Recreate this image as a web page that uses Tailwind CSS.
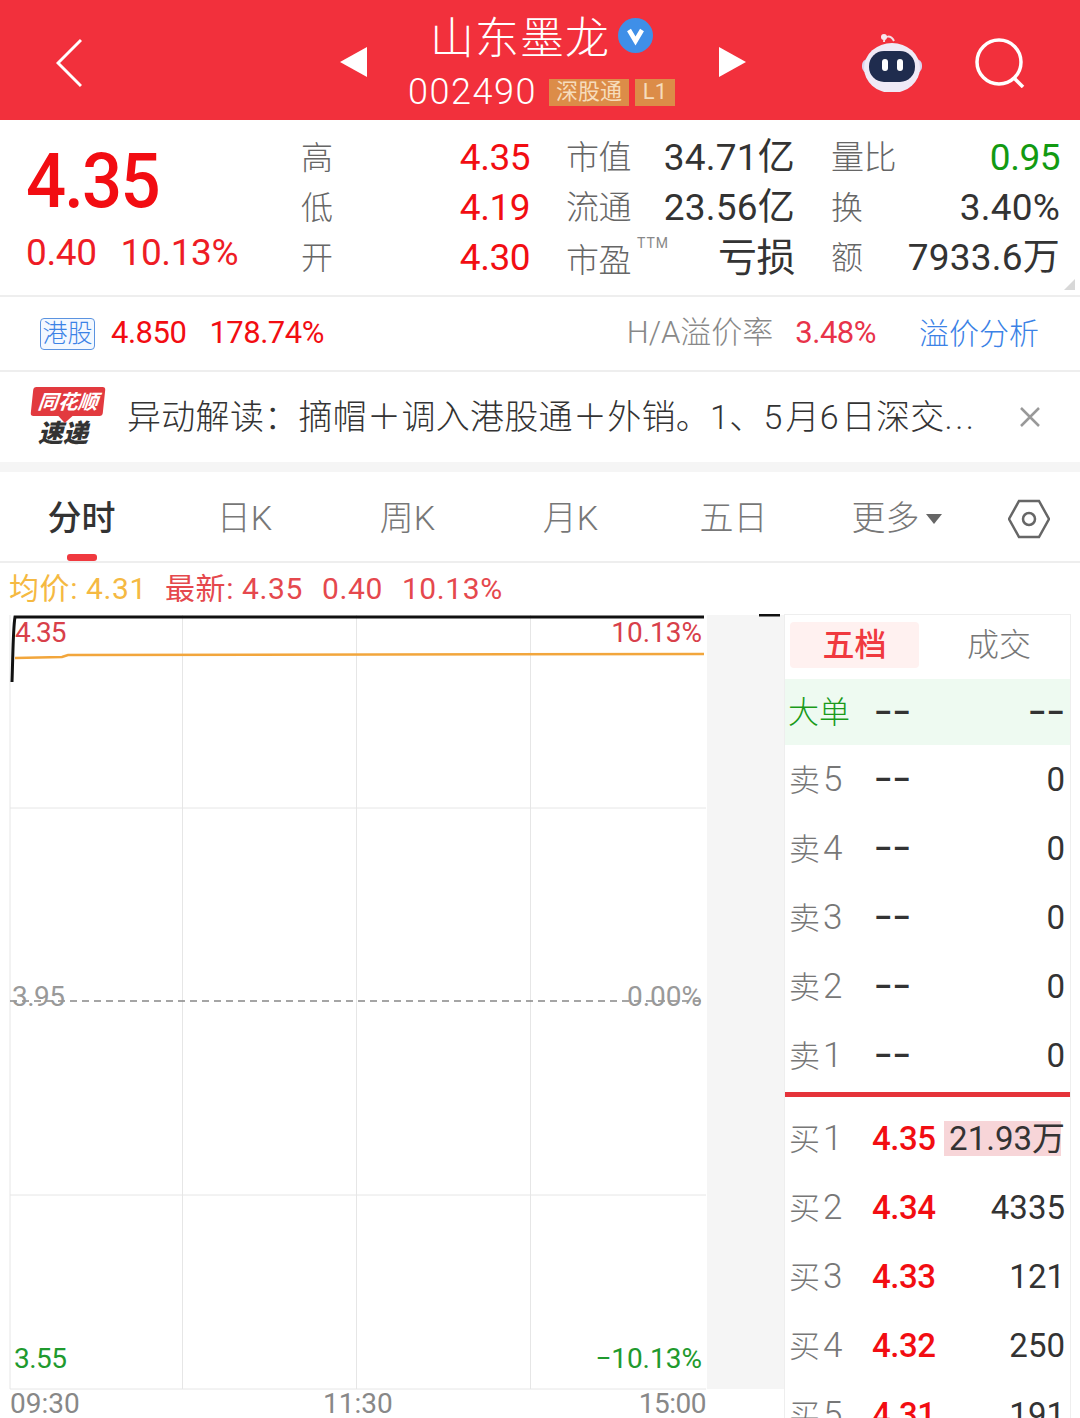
<!DOCTYPE html>
<html lang="en">
<head>
    <meta charset="UTF-8">
    <title>山东墨龙</title>
    <script src="https://cdn.jsdelivr.net/npm/@tailwindcss/browser@4"></script>
</head>
<body class="bg-white font-['Roboto','Noto_Sans_CJK_SC',sans-serif] overflow-hidden">
<div class="w-[1080px] h-[1418px] overflow-hidden">
    <!-- Header -->
    <header class="flex items-center h-[120px] bg-[#f2303c] text-white">
        <svg class="ml-[56px] mt-[5px] w-[26px] h-[50px]" viewBox="0 0 26 50" fill="none" stroke="#fff" stroke-width="3"><path d="M25 2 2 25l23 23"/></svg>
        <svg class="ml-[258px] mt-[4px] w-[27px] h-[30px]" viewBox="0 0 27 30" fill="#fff"><path d="M27 0v30L0 15z"/></svg>
        <div class="w-[352px] self-stretch pt-[7px] flex flex-col items-center">
            <div class="flex items-center h-[56px] -ml-[3px]">
                <span class="text-[44px] leading-none tracking-[1px] font-['Noto_Sans_CJK_SC',sans-serif] font-light">山东墨龙</span>
                <svg class="ml-[8px] w-[35px] h-[35px]" viewBox="0 0 35 35"><circle cx="17.5" cy="17.5" r="17.5" fill="#3f8fe8"/><path d="M11 12l6.500 11L24 12" fill="none" stroke="#fff" stroke-width="4.500"/></svg>
            </div>
            <div class="flex items-center h-[42px] mt-[8px] -ml-[3px]">
                <span class="text-[36px] leading-none tracking-[1.500px] font-light">002490</span>
                <span class="ml-[12px] w-[80px] h-[27px] flex items-center justify-center bg-[#dc8c48] text-[#f6dcbc] text-[22px] leading-none">深股通</span>
                <span class="ml-[6px] w-[40px] h-[27px] flex items-center justify-center bg-[#dc8c48] text-[#f6dcbc] text-[22px] leading-none">L1</span>
            </div>
        </div>
        <svg class="mt-[4px] w-[27px] h-[30px]" viewBox="0 0 27 30" fill="#fff"><path d="M0 0v30l27-15z"/></svg>
        <svg class="ml-[116px] mt-[4px] w-[60px] h-[60px]" viewBox="0 0 60 60">
            <path d="M22 10c0-7 7-7 10-1" fill="none" stroke="#f3dfe6" stroke-width="2"/>
            <circle cx="22" cy="5" r="3" fill="#f7e8ee"/>
            <rect x="0" y="27" width="60" height="14" rx="6" fill="#d9d4ee"/>
            <ellipse cx="30" cy="36" rx="28" ry="25" fill="#efeaf6"/>
            <rect x="7" y="19" width="46" height="31" rx="15" fill="#1f2c4e"/>
            <rect x="20" y="27" width="6" height="12" rx="3" fill="#fff"/>
            <rect x="35" y="27" width="6" height="12" rx="3" fill="#fff"/>
        </svg>
        <svg class="ml-[53px] mt-[5px] w-[50px] h-[50px]" viewBox="0 0 50 50" fill="none" stroke="#fff" stroke-width="3.500"><circle cx="24" cy="24" r="22"/><path d="M39 40l9 9"/></svg>
    </header>

    <!-- Quote -->
    <section class="relative flex h-[177px] border-b-2 border-[#eeeeee]">
        <div class="w-[301px] pl-[26px] pt-[22px]">
            <div class="w-fit origin-left scale-x-[0.93] h-[78px] text-[76px] leading-[78px] font-medium tracking-[-2px] text-[#f20d12]">4.35</div>
            <div class="mt-[13px] flex gap-[24px] text-[37px] leading-[40px] tracking-[-0.4px] text-[#ee1c25]"><span>0.40</span><span>10.13%</span></div>
        </div>
        <div class="grid grid-cols-[229px_229px_229px] gap-x-[36px] auto-rows-[50px] pt-[13px] text-[37px] leading-[50px] tracking-[-0.5px]">
            <div class="flex justify-between"><span class="text-[32px] font-light text-[#666]">高</span><span class="text-[#f20d12]">4.35</span></div>
            <div class="flex justify-between"><span class="text-[33px] font-light text-[#666]">市值</span><span class="tracking-[0.2px] text-[#333]">34.71亿</span></div>
            <div class="flex justify-between"><span class="text-[33px] font-light text-[#666]">量比</span><span class="text-[#129a12]">0.95</span></div>
            <div class="flex justify-between"><span class="text-[32px] font-light text-[#666]">低</span><span class="text-[#f20d12]">4.19</span></div>
            <div class="flex justify-between"><span class="text-[33px] font-light text-[#666]">流通</span><span class="tracking-[0.2px] text-[#333]">23.56亿</span></div>
            <div class="flex justify-between"><span class="text-[32px] font-light text-[#666]">换</span><span class="tracking-[0.2px] text-[#333]">3.40%</span></div>
            <div class="flex justify-between"><span class="text-[32px] font-light text-[#666]">开</span><span class="text-[#f20d12]">4.30</span></div>
            <div class="relative flex justify-between"><span class="pt-[3px] text-[33px] font-light text-[#666]">市盈</span><span class="absolute left-[71px] top-[-15px] text-[14px] tracking-[1px] text-[#888]">TTM</span><span class="text-[39px] text-[#333]">亏损</span></div>
            <div class="flex justify-between"><span class="text-[32px] font-light text-[#666]">额</span><span class="tracking-[0.2px] text-[#333]">7933.6万</span></div>
        </div>
        <svg class="absolute right-[5px] bottom-[5px] w-[11px] h-[11px]" viewBox="0 0 11 11" fill="#d8d8d8"><path d="M11 0v11H0z"/></svg>
    </section>

    <!-- HK row -->
    <section class="flex items-center h-[75px] border-b-2 border-[#eeeeee] pl-[40px] pr-[41px]">
        <span class="w-[55px] h-[32px] flex items-center justify-center rounded-[4px] border border-[#5b93e0] bg-[#f3f8ff] text-[25px] font-light text-[#3b82e6]">港股</span>
        <span class="ml-[16px] text-[31px] tracking-[-0.5px] text-[#f20d12]">4.850</span>
        <span class="ml-[23px] text-[31px] tracking-[-0.5px] text-[#f20d12]">178.74%</span>
        <span class="ml-auto text-[31px] font-light text-[#888]">H/A溢价率</span>
        <span class="ml-[22px] text-[31px] tracking-[-0.5px] text-[#e8334a]">3.48%</span>
        <span class="ml-[43px] text-[30px] font-light text-[#3b82e6]">溢价分析</span>
    </section>

    <!-- News row -->
    <section class="flex items-center h-[90px] pl-[31px] border-b-[10px] border-[#f5f5f5] box-content">
        <div class="w-[74px] flex flex-col items-center">
            <div class="relative w-[72px] h-[29px] -skew-x-6 rounded-[3px] bg-[#e23a3f] flex items-center justify-center text-[20px] leading-none font-bold italic text-white">同花顺
                <span class="absolute left-[30px] bottom-[-5px] w-[10px] h-[10px] rotate-45 bg-[#e23a3f]"></span>
            </div>
            <div class="mt-[4px] -ml-[10px] text-[25px] leading-[28px] font-black italic text-[#333]">速递</div>
        </div>
        <div class="ml-[22px] w-[855px] text-[34px] whitespace-nowrap text-[#333] font-light tracking-[0.3px]">异动解读：摘帽＋调入港股通＋外销。1、<span class="tracking-[3px]">5</span>月<span class="tracking-[3px]">6</span>日深交<span class="tracking-[2.500px]">...</span></div>
        <svg class="ml-[38px] w-[20px] h-[20px]" viewBox="0 0 20 20" stroke="#999" stroke-width="2.500"><path d="M1 1l18 18M19 1 1 19"/></svg>
    </section>

    <!-- Tabs -->
    <nav class="relative flex items-center h-[91px] pt-[4px] border-b-2 border-[#eeeeee] text-[34px] font-light text-[#777]">
        <div class="grid grid-cols-[repeat(6,163px)] text-center">
            <span class="font-medium text-[#333]">分时</span>
            <span>日K</span>
            <span>周K</span>
            <span>月K</span>
            <span>五日</span>
            <span class="flex items-center justify-center gap-[6px]">更多<i class="w-0 h-0 border-x-[8px] border-t-[10px] border-x-transparent border-t-[#666]"></i></span>
        </div>
        <svg class="ml-[30px] w-[42px] h-[42px]" viewBox="0 0 42 42" fill="none" stroke="#666" stroke-width="2.500"><path d="M11 3h20l10 18-10 18H11L1 21z"/><circle cx="21" cy="21" r="6"/></svg>
        <span class="absolute left-[67px] bottom-[0px] w-[30px] h-[7px] rounded-[3px] bg-[#f0393f]"></span>
    </nav>

    <!-- Average / latest -->
    <div class="flex items-center h-[51px] pl-[9px] text-[30px] tracking-[0.6px] whitespace-nowrap">
        <span class="text-[#f5b942]">均价: 4.31</span>
        <span class="ml-[18px] text-[#e5484d]">最新: 4.35</span>
        <span class="ml-[19px] text-[#e5484d]">0.40</span>
        <span class="ml-[19px] text-[#e5484d]">10.13%</span>
    </div>

    <!-- Chart + order book -->
    <main class="flex h-[804px]">
        <div class="relative w-[784px] h-[804px]">
            <svg class="absolute inset-0" width="784" height="804" viewBox="0 0 784 804" fill="none">
                <rect x="707" y="1" width="77" height="774" fill="#f5f5f5"/>
                <path d="M10 1v774H706M182.500 1v774M356.500 1v774M530.500 1v774M10 194h696M10 581h696" stroke="#e6e6e6" stroke-width="1"/>
                <path d="M10 387H706" stroke="#888" stroke-width="1.500" stroke-dasharray="7 5"/>
                <path d="M12 68C13 40 13 15 15 3H704" stroke="#111" stroke-width="3"/>
                <path d="M759 1h21" stroke="#111" stroke-width="3"/>
                <path d="M15 44 62 43 68 41 704 40" stroke="#f2a63c" stroke-width="2.500"/>
            </svg>
            <span class="absolute left-[15px] top-[2px] text-[28px] leading-[34px] tracking-[-1px] text-[#d8404a]">4.35</span>
            <span class="absolute right-[82px] top-[2px] text-[28px] leading-[34px] text-[#d8404a]">10.13%</span>
            <span class="absolute left-[12px] top-[366px] text-[28px] leading-[34px] tracking-[-0.5px] text-[#999]">3.95</span>
            <span class="absolute right-[82px] top-[366px] text-[28px] leading-[34px] text-[#999]">0.00%</span>
            <span class="absolute left-[14px] top-[728px] text-[28px] leading-[34px] tracking-[-0.5px] text-[#1f9a2e]">3.55</span>
            <span class="absolute right-[82px] top-[728px] text-[28px] leading-[34px] text-[#1f9a2e]">−10.13%</span>
            <span class="absolute left-[10px] top-[777px] text-[28px] leading-[26px] text-[#888]">09:30</span>
            <span class="absolute left-[323px] top-[777px] text-[28px] leading-[26px] text-[#888]">11:30</span>
            <span class="absolute right-[78px] top-[777px] text-[28px] leading-[26px] tracking-[-0.5px] text-[#888]">15:00</span>
        </div>

        <div class="w-[287px] border-x border-t border-[#eeeeee] text-[33px] leading-none">
            <div class="flex h-[64px] pt-[7px] pl-[5px]">
                <span class="shrink-0 w-[129px] h-[46px] flex items-center justify-center rounded-[4px] bg-[#fff1f0] text-[32px] font-medium text-[#f0393f]">五档</span>
                <span class="shrink-0 ml-[30px] w-[100px] h-[46px] flex items-center justify-center text-[32px] font-light text-[#777]">成交</span>
            </div>
            <div class="flex items-center h-[66px] pl-[3px] pr-[5px] bg-[#eefaf1]"><span class="w-[86px] text-[31px] text-[#1a9a1a] font-light">大单</span><span class="font-medium text-[#333]">−−</span><span class="ml-auto font-medium text-[#333]">−−</span></div>
            <div class="flex items-center h-[69px] pl-[4px] pr-[5px]"><span class="w-[85px] text-[31px] text-[#777] font-light">卖<span class="ml-[3px] text-[35px]">5</span></span><span class="font-medium text-[#333]">−−</span><span class="ml-auto text-[#333]">0</span></div>
            <div class="flex items-center h-[69px] pl-[4px] pr-[5px]"><span class="w-[85px] text-[31px] text-[#777] font-light">卖<span class="ml-[3px] text-[35px]">4</span></span><span class="font-medium text-[#333]">−−</span><span class="ml-auto text-[#333]">0</span></div>
            <div class="flex items-center h-[69px] pl-[4px] pr-[5px]"><span class="w-[85px] text-[31px] text-[#777] font-light">卖<span class="ml-[3px] text-[35px]">3</span></span><span class="font-medium text-[#333]">−−</span><span class="ml-auto text-[#333]">0</span></div>
            <div class="flex items-center h-[69px] pl-[4px] pr-[5px]"><span class="w-[85px] text-[31px] text-[#777] font-light">卖<span class="ml-[3px] text-[35px]">2</span></span><span class="font-medium text-[#333]">−−</span><span class="ml-auto text-[#333]">0</span></div>
            <div class="flex items-center h-[69px] pl-[4px] pr-[5px]"><span class="w-[85px] text-[31px] text-[#777] font-light">卖<span class="ml-[3px] text-[35px]">1</span></span><span class="font-medium text-[#333]">−−</span><span class="ml-auto text-[#333]">0</span></div>
            <div class="h-[5px] mt-[2px] bg-[#e5333a]"></div>
            <div class="flex items-center h-[69px] mt-[7px] pl-[4px] pr-[5px]"><span class="w-[83px] text-[31px] text-[#777] font-light">买<span class="ml-[3px] text-[35px]">1</span></span><span class="font-medium tracking-[-0.5px] text-[#f20d12]">4.35</span><span class="relative ml-auto text-[#333]"><i class="absolute -left-[5px] right-[4px] -top-[1px] h-[35px] bg-[#f7d5d8]"></i><span class="relative">21.93万</span></span></div>
            <div class="flex items-center h-[69px] pl-[4px] pr-[5px]"><span class="w-[83px] text-[31px] text-[#777] font-light">买<span class="ml-[3px] text-[35px]">2</span></span><span class="font-medium tracking-[-0.5px] text-[#f20d12]">4.34</span><span class="ml-auto text-[#333]">4335</span></div>
            <div class="flex items-center h-[69px] pl-[4px] pr-[5px]"><span class="w-[83px] text-[31px] text-[#777] font-light">买<span class="ml-[3px] text-[35px]">3</span></span><span class="font-medium tracking-[-0.5px] text-[#f20d12]">4.33</span><span class="ml-auto text-[#333]">121</span></div>
            <div class="flex items-center h-[69px] pl-[4px] pr-[5px]"><span class="w-[83px] text-[31px] text-[#777] font-light">买<span class="ml-[3px] text-[35px]">4</span></span><span class="font-medium tracking-[-0.5px] text-[#f20d12]">4.32</span><span class="ml-auto text-[#333]">250</span></div>
            <div class="flex items-center h-[69px] pl-[4px] pr-[5px]"><span class="w-[83px] text-[31px] text-[#777] font-light">买<span class="ml-[3px] text-[35px]">5</span></span><span class="font-medium tracking-[-0.5px] text-[#f20d12]">4.31</span><span class="ml-auto text-[#333]">191</span></div>
        </div>
    </main>
</div>
</body>
</html>
